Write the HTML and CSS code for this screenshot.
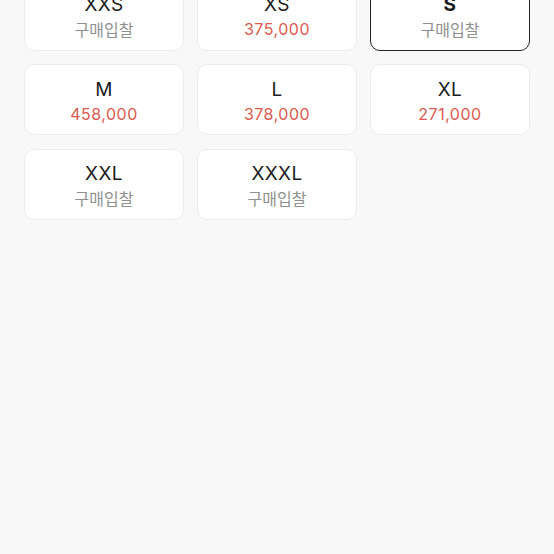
FILE: index.html
```html
<!DOCTYPE html>
<html lang="ko">
<head>
<meta charset="utf-8"/>
<meta content="width=device-width, initial-scale=1.0" name="viewport"/>
<title>사이즈 선택</title>
<link rel="stylesheet" href="styles.css">
</head>
<body>
<div class="size-grid">
<div class="size-card">
<div class="size-name">XXS</div>
<div class="size-price empty">구매입찰</div>
</div>
<div class="size-card">
<div class="size-name">XS</div>
<div class="size-price">375,000</div>
</div>
<div class="size-card selected">
<div class="size-name">S</div>
<div class="size-price empty">구매입찰</div>
</div>
<div class="size-card">
<div class="size-name">M</div>
<div class="size-price">458,000</div>
</div>
<div class="size-card">
<div class="size-name">L</div>
<div class="size-price">378,000</div>
</div>
<div class="size-card">
<div class="size-name">XL</div>
<div class="size-price">271,000</div>
</div>
<div class="size-card">
<div class="size-name">XXL</div>
<div class="size-price empty">구매입찰</div>
</div>
<div class="size-card">
<div class="size-name">XXXL</div>
<div class="size-price empty">구매입찰</div>
</div>
</div>
</body>
</html>
```

FILE: styles.css
```css
* {
    margin: 0;
    padding: 0;
    box-sizing: border-box;
}

body {
    font-family: Inter, "Noto Sans CJK KR", sans-serif;
    background: #f8f8f8;
    min-height: 100vh;
}

.size-grid {
    display: grid;
    grid-template-columns: repeat(3, 1fr);
    gap: 13.5px 13px;
    padding: 0 24px;
    margin-top: -20.5px;
}

.size-card {
    height: 71px;
    background: white;
    border: 1px solid #ececec;
    border-radius: 10px;
    display: flex;
    flex-direction: column;
    align-items: center;
    justify-content: center;
    padding-top: 4px;
}

.size-card.selected {
    border: 1.5px solid #222;
}

.size-card.selected .size-name {
    font-weight: 700;
}

.size-name {
    font-size: 19px;
    line-height: 24px;
    letter-spacing: 0.4px;
    color: #1c1c1c;
}

.size-price {
    font-size: 16px;
    line-height: 24px;
    letter-spacing: 0.5px;
    color: #db5a4f;
}

.size-price.empty {
    font-family: "Noto Sans CJK KR", sans-serif;
    letter-spacing: 0;
    color: #8f8f8f;
}
```
